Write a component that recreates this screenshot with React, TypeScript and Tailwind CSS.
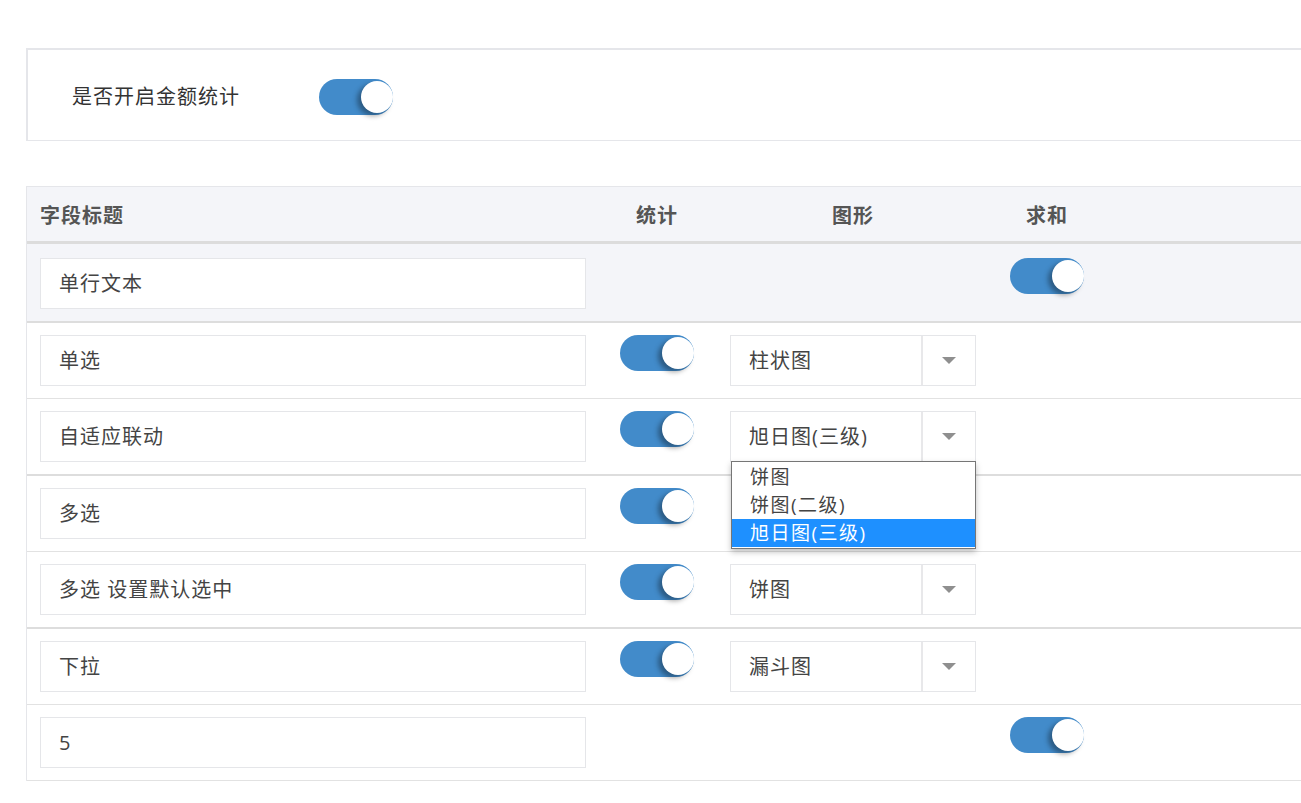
import { useState } from "react";

type Row = {
  title: string;
  stat: boolean | null;
  chart: string | null;
  sum: boolean | null;
  open?: boolean;
};

// the 多选 row's select sits under the open list, so it is left out
const rows: Row[] = [
  { title: "单行文本", stat: null, chart: null, sum: true },
  { title: "单选", stat: true, chart: "柱状图", sum: null },
  { title: "自适应联动", stat: true, chart: "旭日图(三级)", sum: null, open: true },
  { title: "多选", stat: true, chart: null, sum: null },
  { title: "多选 设置默认选中", stat: true, chart: "饼图", sum: null },
  { title: "下拉", stat: true, chart: "漏斗图", sum: null },
  { title: "5", stat: null, chart: null, sum: true },
];

const chartOptions = ["饼图", "饼图(二级)", "旭日图(三级)"];

// heavier separators after the 1st, 3rd and 5th rows
const rowBorders = [
  "border-b-[2px] border-[#dddddd]",
  "border-b border-[#e2e2e2]",
  "border-b-[2px] border-[#dddddd]",
  "border-b border-[#e2e2e2]",
  "border-b-[2px] border-[#dddddd]",
  "border-b border-[#e2e2e2]",
  "border-b border-[#e2e2e2]",
];

function Toggle({ on }: { on: boolean }) {
  const [checked, setChecked] = useState(on);
  return (
    <button
      type="button"
      onClick={() => setChecked(!checked)}
      className={`relative w-[74px] h-[36px] rounded-full ${
        checked ? "bg-[#428bca]" : "bg-[#d5d5d5]"
      }`}
    >
      <span
        className={`absolute top-[2px] w-[32px] h-[32px] rounded-full bg-white shadow-[-4px_3px_5px_rgba(0,0,0,0.35)] ${
          checked ? "right-0" : "left-[2px]"
        }`}
      />
    </button>
  );
}

function ChartSelect({ value, open }: { value: string; open?: boolean }) {
  return (
    <div className="relative w-[246px]">
      <div className="flex h-[51px] border border-[#e5e6e9] bg-white">
        <div className="flex-1 flex items-center pl-[18px] text-[20px] tracking-[1px] text-[#444]">
          {value}
        </div>
        <div className="w-[54px] flex items-center justify-center border-l-2 border-[#e8e8ea]">
          <svg width="14" height="7" viewBox="0 0 14 7">
            <path d="M0 0 L14 0 L7 7 Z" fill="#8f8f8f" />
          </svg>
        </div>
      </div>
      {open && (
        <ul className="absolute left-[1px] top-[50px] z-10 w-[245px] border border-[#767676] bg-white py-[1px] shadow-[0_3px_6px_rgba(0,0,0,0.25)]">
          {chartOptions.map((opt) => (
            <li
              key={opt}
              className={`h-[28px] leading-[28px] overflow-hidden pl-[18px] text-[19px] tracking-[1.5px] ${
                opt === value ? "bg-[#1e90ff] text-white" : "text-[#444]"
              }`}
            >
              {opt}
            </li>
          ))}
        </ul>
      )}
    </div>
  );
}

export default function App() {
  return (
    <div
      className="w-[1301px] h-[803px] overflow-hidden bg-white"
      style={{ fontFamily: '"Open Sans", "Noto Sans CJK SC", sans-serif' }}
    >
      {/* amount statistics switch */}
      <div className="ml-[26px] mt-[48px] w-[1300px] h-[93px] pt-[4px] border-2 border-[#e5e6ea] border-b flex items-center">
        <span className="ml-[44px] w-[247px] text-[20px] tracking-[1px] text-[#333]">
          是否开启金额统计
        </span>
        <Toggle on />
      </div>

      {/* field table */}
      <div className="ml-[26px] mt-[45px] w-[1300px] border-l border-t border-[#e5e6ea]">
        <div className="grid grid-cols-[577px_106px_286px_102px_1fr] h-[57px] pt-[3px] items-center bg-[#f4f5f9] border-b-[3px] border-[#dcdcdc] text-[20px] font-bold tracking-[1px] text-[#555]">
          <div className="pl-[13px]">字段标题</div>
          <div className="text-center">统计</div>
          <div className="text-center">图形</div>
          <div className="text-center">求和</div>
          <div />
        </div>

        {rows.map((row, i) => (
          <div
            key={i}
            className={`grid grid-cols-[577px_106px_286px_102px_1fr] items-start ${
              i === 0 ? "bg-[#f4f5f9] pt-[14px] pb-[12px]" : "bg-white py-[12px]"
            } ${rowBorders[i]}`}
          >
            <div className="pl-[13px]">
              <div className="w-[546px] h-[51px] flex items-center pl-[18px] pt-[1px] border border-[#e5e6e9] bg-white text-[20px] tracking-[1px] text-[#444]">
                {row.title}
              </div>
            </div>
            <div className="flex justify-center">
              {row.stat !== null && <Toggle on={row.stat} />}
            </div>
            <div className="pl-[20px]">
              {row.chart && <ChartSelect value={row.chart} open={row.open} />}
            </div>
            <div className="flex justify-center">
              {row.sum !== null && <Toggle on={row.sum} />}
            </div>
            <div />
          </div>
        ))}
      </div>
    </div>
  );
}
